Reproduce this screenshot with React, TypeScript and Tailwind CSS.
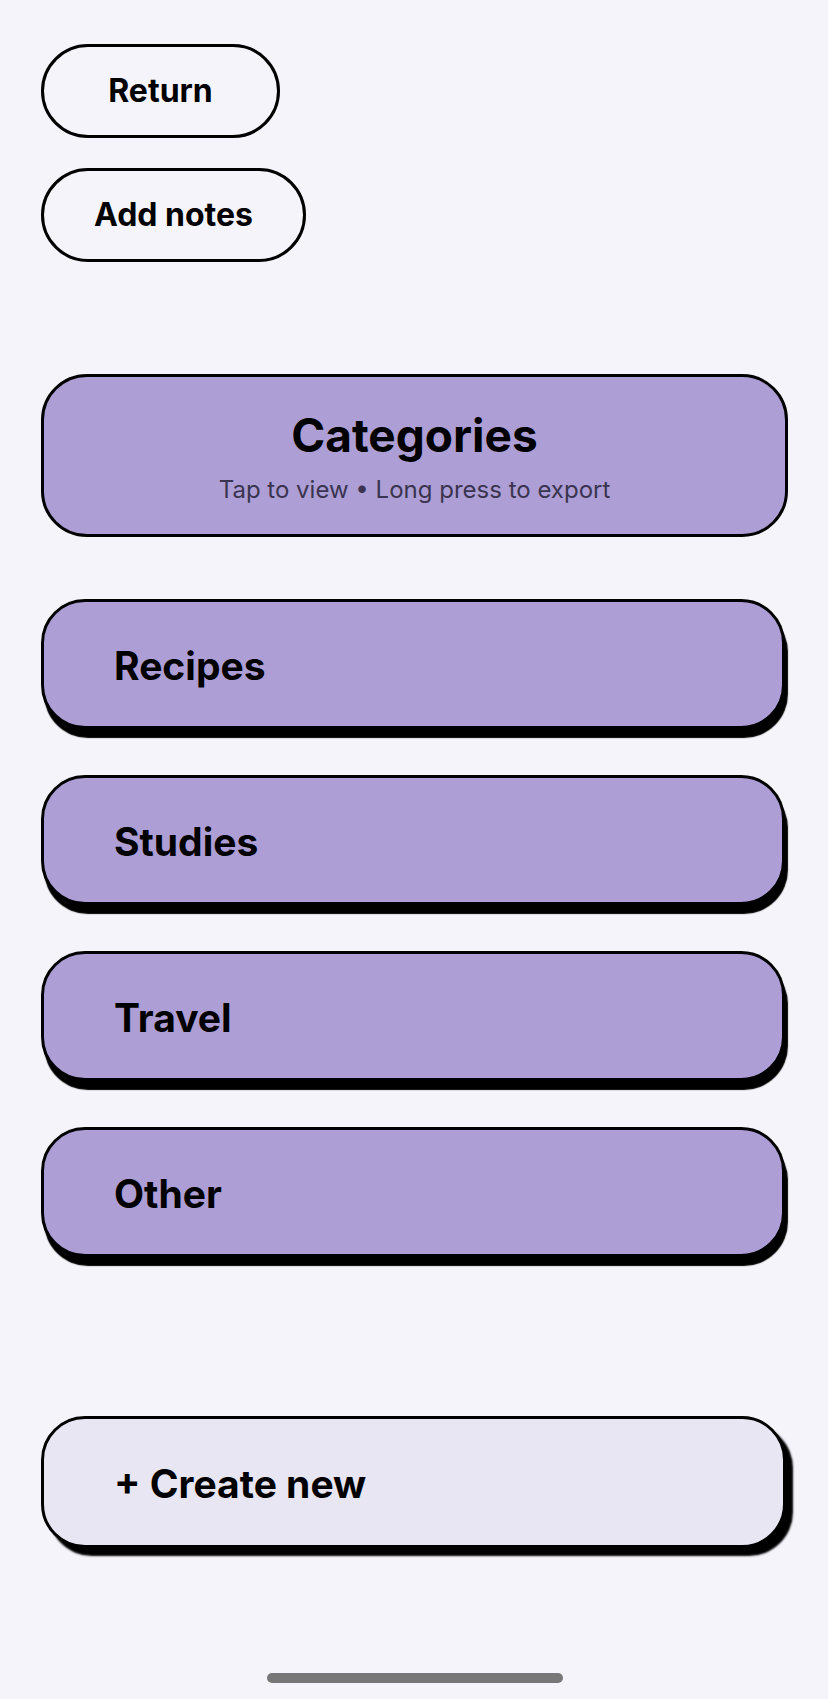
import React from 'react';

const categories = ['Recipes', 'Studies', 'Travel', 'Other'];

const PillButton = ({ label, width }: { label: string; width: string }) => (
  <button
    className={`${width} h-[94px] rounded-full border-[3px] border-black bg-[#f5f4fa] text-[32px] font-bold text-black`}
  >
    {label}
  </button>
);

const App = () => {
  return (
    <div
      className="min-h-[1699px] bg-[#f5f4fa] flex flex-col pl-[41px] pr-[40px] pt-[44px]"
      style={{ fontFamily: 'Inter, "Noto Sans", sans-serif' }}
    >
      {/* Top actions */}
      <div className="flex flex-col items-start gap-[30px]">
        <PillButton label="Return" width="w-[239px]" />
        <PillButton label="Add notes" width="w-[265px]" />
      </div>

      {/* Header card */}
      <div className="mt-[112px] h-[163px] rounded-[46px] border-[3px] border-black bg-[#ad9fd5] flex flex-col items-center justify-center">
        <h1 className="mt-[2px] text-[46px] font-bold leading-none text-black">Categories</h1>
        <p className="mt-[20px] text-[24px] leading-none text-[#3a3450]">
          Tap to view • Long press to export
        </p>
      </div>

      {/* Category list */}
      <div className="mt-[62px] flex flex-col gap-[46px] mr-[3px]">
        {categories.map((c) => (
          <div
            key={c}
            className="h-[130px] rounded-[44px] border-[3px] border-black bg-[#ad9fd5] flex items-center pl-[70px] pt-[4px] shadow-[3px_9px_1px_#000]"
          >
            <span className="text-[39px] font-bold text-black">{c}</span>
          </div>
        ))}
      </div>

      {/* Create */}
      <div className="mt-[159px] mr-[2px] h-[132px] rounded-[44px] border-[3px] border-black bg-[#e8e6f3] flex items-center pl-[70px] pt-[4px] shadow-[7px_8px_2px_#000]">
        <span className="text-[39px] font-bold text-black">+ Create new</span>
      </div>

      {/* Home indicator */}
      <div className="mt-auto mb-[16px] flex justify-center">
        <div className="w-[296px] h-[10px] rounded-full bg-[#777]" />
      </div>
    </div>
  );
};

export default App;
